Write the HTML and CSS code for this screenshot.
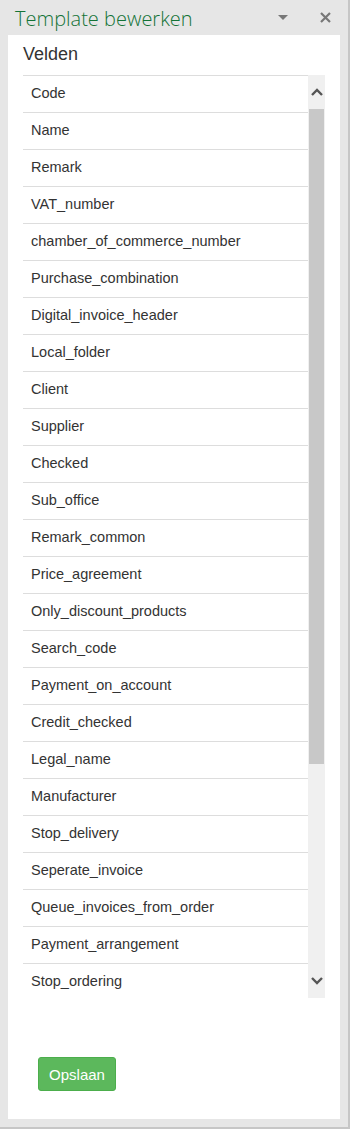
FILE: index.html
```html
<!DOCTYPE html>
<html lang="nl">

<head>
    <meta charset="UTF-8">
    <title>Template bewerken</title>
    <link rel="stylesheet" href="styles.css">
</head>

<body>

    <div class="pane">
        <!-- taskpane header -->
        <div class="pane-header">
            <span class="pane-title">Template bewerken</span>
            <span class="pane-tools">
                <svg class="tool-menu" width="10" height="5" viewBox="0 0 10 5">
                    <path d="M0 0H10L5 5Z" fill="#777" />
                </svg>
                <svg class="tool-close" width="11" height="11" viewBox="0 0 11 11">
                    <path d="M1 1L10 10M10 1L1 10" stroke="#777" stroke-width="2.2" />
                </svg>
            </span>
        </div>

        <div class="card">
            <h2>Velden</h2>

            <div class="fields">
                <ul class="field-list">
                    <li>Code</li>
                    <li>Name</li>
                    <li>Remark</li>
                    <li>VAT_number</li>
                    <li>chamber_of_commerce_number</li>
                    <li>Purchase_combination</li>
                    <li>Digital_invoice_header</li>
                    <li>Local_folder</li>
                    <li>Client</li>
                    <li>Supplier</li>
                    <li>Checked</li>
                    <li>Sub_office</li>
                    <li>Remark_common</li>
                    <li>Price_agreement</li>
                    <li>Only_discount_products</li>
                    <li>Search_code</li>
                    <li>Payment_on_account</li>
                    <li>Credit_checked</li>
                    <li>Legal_name</li>
                    <li>Manufacturer</li>
                    <li>Stop_delivery</li>
                    <li>Seperate_invoice</li>
                    <li>Queue_invoices_from_order</li>
                    <li>Payment_arrangement</li>
                    <li>Stop_ordering</li>
                </ul>

                <div class="scrollbar">
                    <div class="scroll-btn">
                        <svg width="12" height="8" viewBox="0 0 12 8">
                            <path d="M1 7L6 2L11 7" fill="none" stroke="#555" stroke-width="2.4" />
                        </svg>
                    </div>
                    <div class="scroll-track">
                        <div class="scroll-thumb"></div>
                    </div>
                    <div class="scroll-btn">
                        <svg width="12" height="8" viewBox="0 0 12 8">
                            <path d="M1 1L6 6L11 1" fill="none" stroke="#555" stroke-width="2.4" />
                        </svg>
                    </div>
                </div>
            </div>

            <button class="save-btn">Opslaan</button>
        </div>
    </div>

</body>

</html>
```

FILE: styles.css
```css
* {
    box-sizing: border-box;
}

body {
    margin: 0;
    background: #e6e6e6;
    font-family: 'Liberation Sans', Arial, sans-serif;
}

.pane {
    width: 350px;
    height: 1129px;
    padding: 0 8px 8px 8px;
    border-right: 2px solid #c6c6c6;
    border-bottom: 2px solid #c6c6c6;
    display: flex;
    flex-direction: column;
}

.pane-header {
    height: 35px;
    display: flex;
    align-items: center;
    justify-content: space-between;
}

.pane-title {
    font-family: 'Open Sans', sans-serif;
    font-weight: 300;
    font-size: 20px;
    color: #137336;
    margin-left: 7px;
    margin-top: 2px;
}

.pane-tools {
    display: flex;
    align-items: center;
    margin-right: 9px;
}

.tool-menu {
    margin-right: 32px;
}

.card {
    flex: 1;
    background: #fff;
    padding: 0 15px;
    display: flex;
    flex-direction: column;
}

h2 {
    margin: 9px 0 0 0;
    height: 31px;
    font-size: 18px;
    font-weight: normal;
    color: #333;
}

.fields {
    display: flex;
    height: 923px;
}

.field-list {
    list-style: none;
    margin: 0;
    padding: 0;
    flex: 1;
    overflow: hidden;
    border-top: 1px solid #ddd;
}

.field-list li {
    height: 37px;
    line-height: 35px;
    padding-left: 8px;
    font-size: 14.5px;
    color: #333;
    border-bottom: 1px solid #ddd;
}

.scrollbar {
    width: 17px;
    background: #f0f0f0;
    display: flex;
    flex-direction: column;
}

.scroll-btn {
    height: 34px;
    display: flex;
    align-items: center;
    justify-content: center;
}

.scroll-track {
    flex: 1;
    padding: 0 1px;
}

.scroll-thumb {
    height: 655px;
    background: #c8c8c8;
}

.save-btn {
    align-self: flex-start;
    margin: 59px 0 0 15px;
    width: 78px;
    height: 34px;
    background: #5cb85c;
    border: 1px solid #4cae4c;
    border-radius: 3px;
    color: #fff;
    font-family: 'Liberation Sans', Arial, sans-serif;
    font-size: 15px;
    cursor: pointer;
}
```
